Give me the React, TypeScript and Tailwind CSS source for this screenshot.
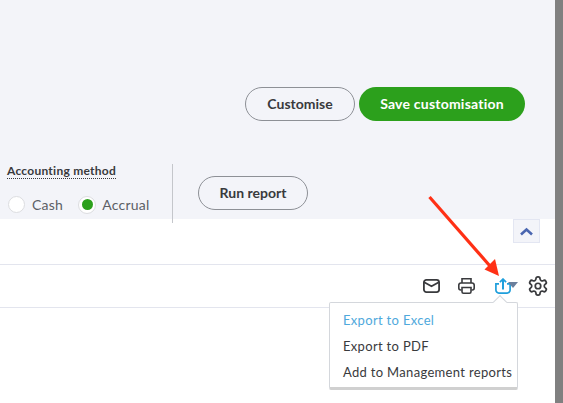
export default function App() {
  return (
    <div className="relative flex h-[403px] w-[563px] overflow-hidden bg-white font-['Lato','Liberation_Sans',sans-serif]">
      <div className="flex w-[555px] flex-col">
        <div className="flex h-[219px] flex-col bg-[#f3f4f9]">
          <div className="flex justify-end gap-[4px] pr-[30px] pt-[87px]">
            <button className="h-[34px] w-[110px] rounded-full border border-[#8d9096] pb-[2px] text-[14px] font-bold text-[#393a3d]">Customise</button>
            <button className="h-[34px] w-[166px] rounded-full bg-[#2ca01c] pb-[2px] text-[14px] font-bold tracking-[0.22px] text-white">Save customisation</button>
          </div>
          <div className="flex pl-[7px] pt-[43px]">
            <div className="flex w-[165px] flex-col">
              <span className="w-fit border-b border-dotted border-[#393a3d] text-[12px] font-bold leading-[14px] tracking-[0.25px] text-[#393a3d]">Accounting method</span>
              <div className="mt-[15px] flex items-center text-[14px] tracking-[0.25px] text-[#5c5f66]">
                <span className="ml-[1px] mr-[7px] h-[17px] w-[17px] rounded-full border border-[#dcdde0] bg-white"></span>
                <span className="mr-[15px]">Cash</span>
                <span className="mr-[6px] flex h-[18px] w-[18px] items-center justify-center rounded-full border border-[#dcdde0] bg-white">
                  <span className="h-[11px] w-[11px] rounded-full bg-[#2ca01c]"></span>
                </span>
                <span>Accrual</span>
              </div>
            </div>
            <div className="h-[59px] w-px shrink-0 bg-[#c4c6cb]"></div>
            <button className="ml-[25px] mt-[12px] h-[34px] w-[110px] rounded-full border border-[#8d9096] pb-[2px] text-[14px] font-bold text-[#393a3d]">Run report</button>
          </div>
        </div>
        <div className="flex h-[46px] items-start justify-end border-b border-[#e3e5ee] pr-[15px]">
          <div className="flex h-[24px] w-[27px] items-center justify-center border border-[#e3e6f2] bg-[#f3f4f9]">
            <svg width="15" height="9" viewBox="0 0 15 9" fill="none" stroke="#4a66b0" strokeWidth="2.6"><path d="M2 7.5 7.5 2.5 13 7.5" /></svg>
          </div>
        </div>
        <div className="flex h-[43px] items-center justify-end border-b border-[#e3e5ee] pr-[6px]">
          <svg className="mr-[18px]" width="17" height="14" viewBox="0 0 17 14" fill="none" stroke="#393a3d" strokeWidth="1.8">
            <rect x="0.9" y="0.9" width="15.2" height="12.2" rx="2.5" />
            <path d="M1.2 3.2 8.5 7.2 15.8 3.2" />
          </svg>
          <svg className="mr-[20px]" width="17" height="16" viewBox="0 0 17 16" fill="none" stroke="#393a3d" strokeWidth="1.6">
            <path d="M4 5V0.8h9V5" />
            <path d="M3.5 12H2.8A2 2 0 0 1 .8 10V7a2 2 0 0 1 2-2h11.4a2 2 0 0 1 2 2v3a2 2 0 0 1-2 2h-.7" />
            <path d="M4 9.5h9v4.2a1.5 1.5 0 0 1-1.5 1.5h-6A1.5 1.5 0 0 1 4 13.7z" />
          </svg>
          <svg width="16" height="16" viewBox="0 0 16 16" fill="none" stroke="#1f9fdc" strokeWidth="1.7">
            <path d="M4 5.8H.9v6.3a3 3 0 0 0 3 3h8.2a3 3 0 0 0 3-3V5.8H12" />
            <path d="M8 11.5V1.2" strokeWidth="2" />
            <path d="M4.9 4.2 8 1.1l3.1 3.1" />
          </svg>
          <svg className="-ml-[3px] -mt-[3px] mr-[9px]" width="10" height="6" viewBox="0 0 10 6"><path d="M0 0h10L5 6z" fill="#6b7f9c" /></svg>
          <svg width="22" height="22" viewBox="0 0 24 24" fill="none" stroke="#393a3d" strokeWidth="1.9" strokeLinecap="round" strokeLinejoin="round">
            <path d="M12.22 2h-.44a2 2 0 0 0-2 2v.18a2 2 0 0 1-1 1.73l-.43.25a2 2 0 0 1-2 0l-.15-.08a2 2 0 0 0-2.73.73l-.22.38a2 2 0 0 0 .73 2.73l.15.1a2 2 0 0 1 1 1.72v.51a2 2 0 0 1-1 1.74l-.15.09a2 2 0 0 0-.73 2.73l.22.38a2 2 0 0 0 2.73.73l.15-.08a2 2 0 0 1 2 0l.43.25a2 2 0 0 1 1 1.73V20a2 2 0 0 0 2 2h.44a2 2 0 0 0 2-2v-.18a2 2 0 0 1 1-1.73l.43-.25a2 2 0 0 1 2 0l.15.08a2 2 0 0 0 2.73-.73l.22-.39a2 2 0 0 0-.73-2.73l-.15-.08a2 2 0 0 1-1-1.74v-.5a2 2 0 0 1 1-1.74l.15-.09a2 2 0 0 0 .73-2.73l-.22-.38a2 2 0 0 0-2.73-.73l-.15.08a2 2 0 0 1-2 0l-.43-.25a2 2 0 0 1-1-1.73V4a2 2 0 0 0-2-2z" />
            <circle cx="12" cy="12" r="3" />
          </svg>
        </div>
      </div>
      <div className="w-[8px] bg-[#808080]"></div>

      {/* Export menu */}
      <div className="absolute left-[329px] top-[302px] h-[88px] w-[189px] rounded-[2px] border border-b-[3px] border-[#d4d7dc] border-b-[#d0d0d0] bg-white pl-[13px] pt-[4px] text-[13px] leading-[26px] tracking-[0.32px] text-[#393a3d]">
        <div className="text-[#4fa9dc]">Export to Excel</div>
        <div>Export to PDF</div>
        <div className="whitespace-nowrap">Add to Management reports</div>
        <span className="absolute -top-[6px] left-[165px] h-[10px] w-[10px] rotate-45 border-l border-t border-[#d4d7dc] bg-white"></span>
      </div>

      {/* Annotation arrow */}
      <svg className="absolute left-0 top-0" width="563" height="403" viewBox="0 0 563 403" fill="none">
        <path d="M429.5 197 490 266" stroke="#ff3015" strokeWidth="3.2" />
        <path d="M484.5 269.5 495 259 499 276 Z" fill="#ff3015" />
      </svg>
    </div>
  );
}
